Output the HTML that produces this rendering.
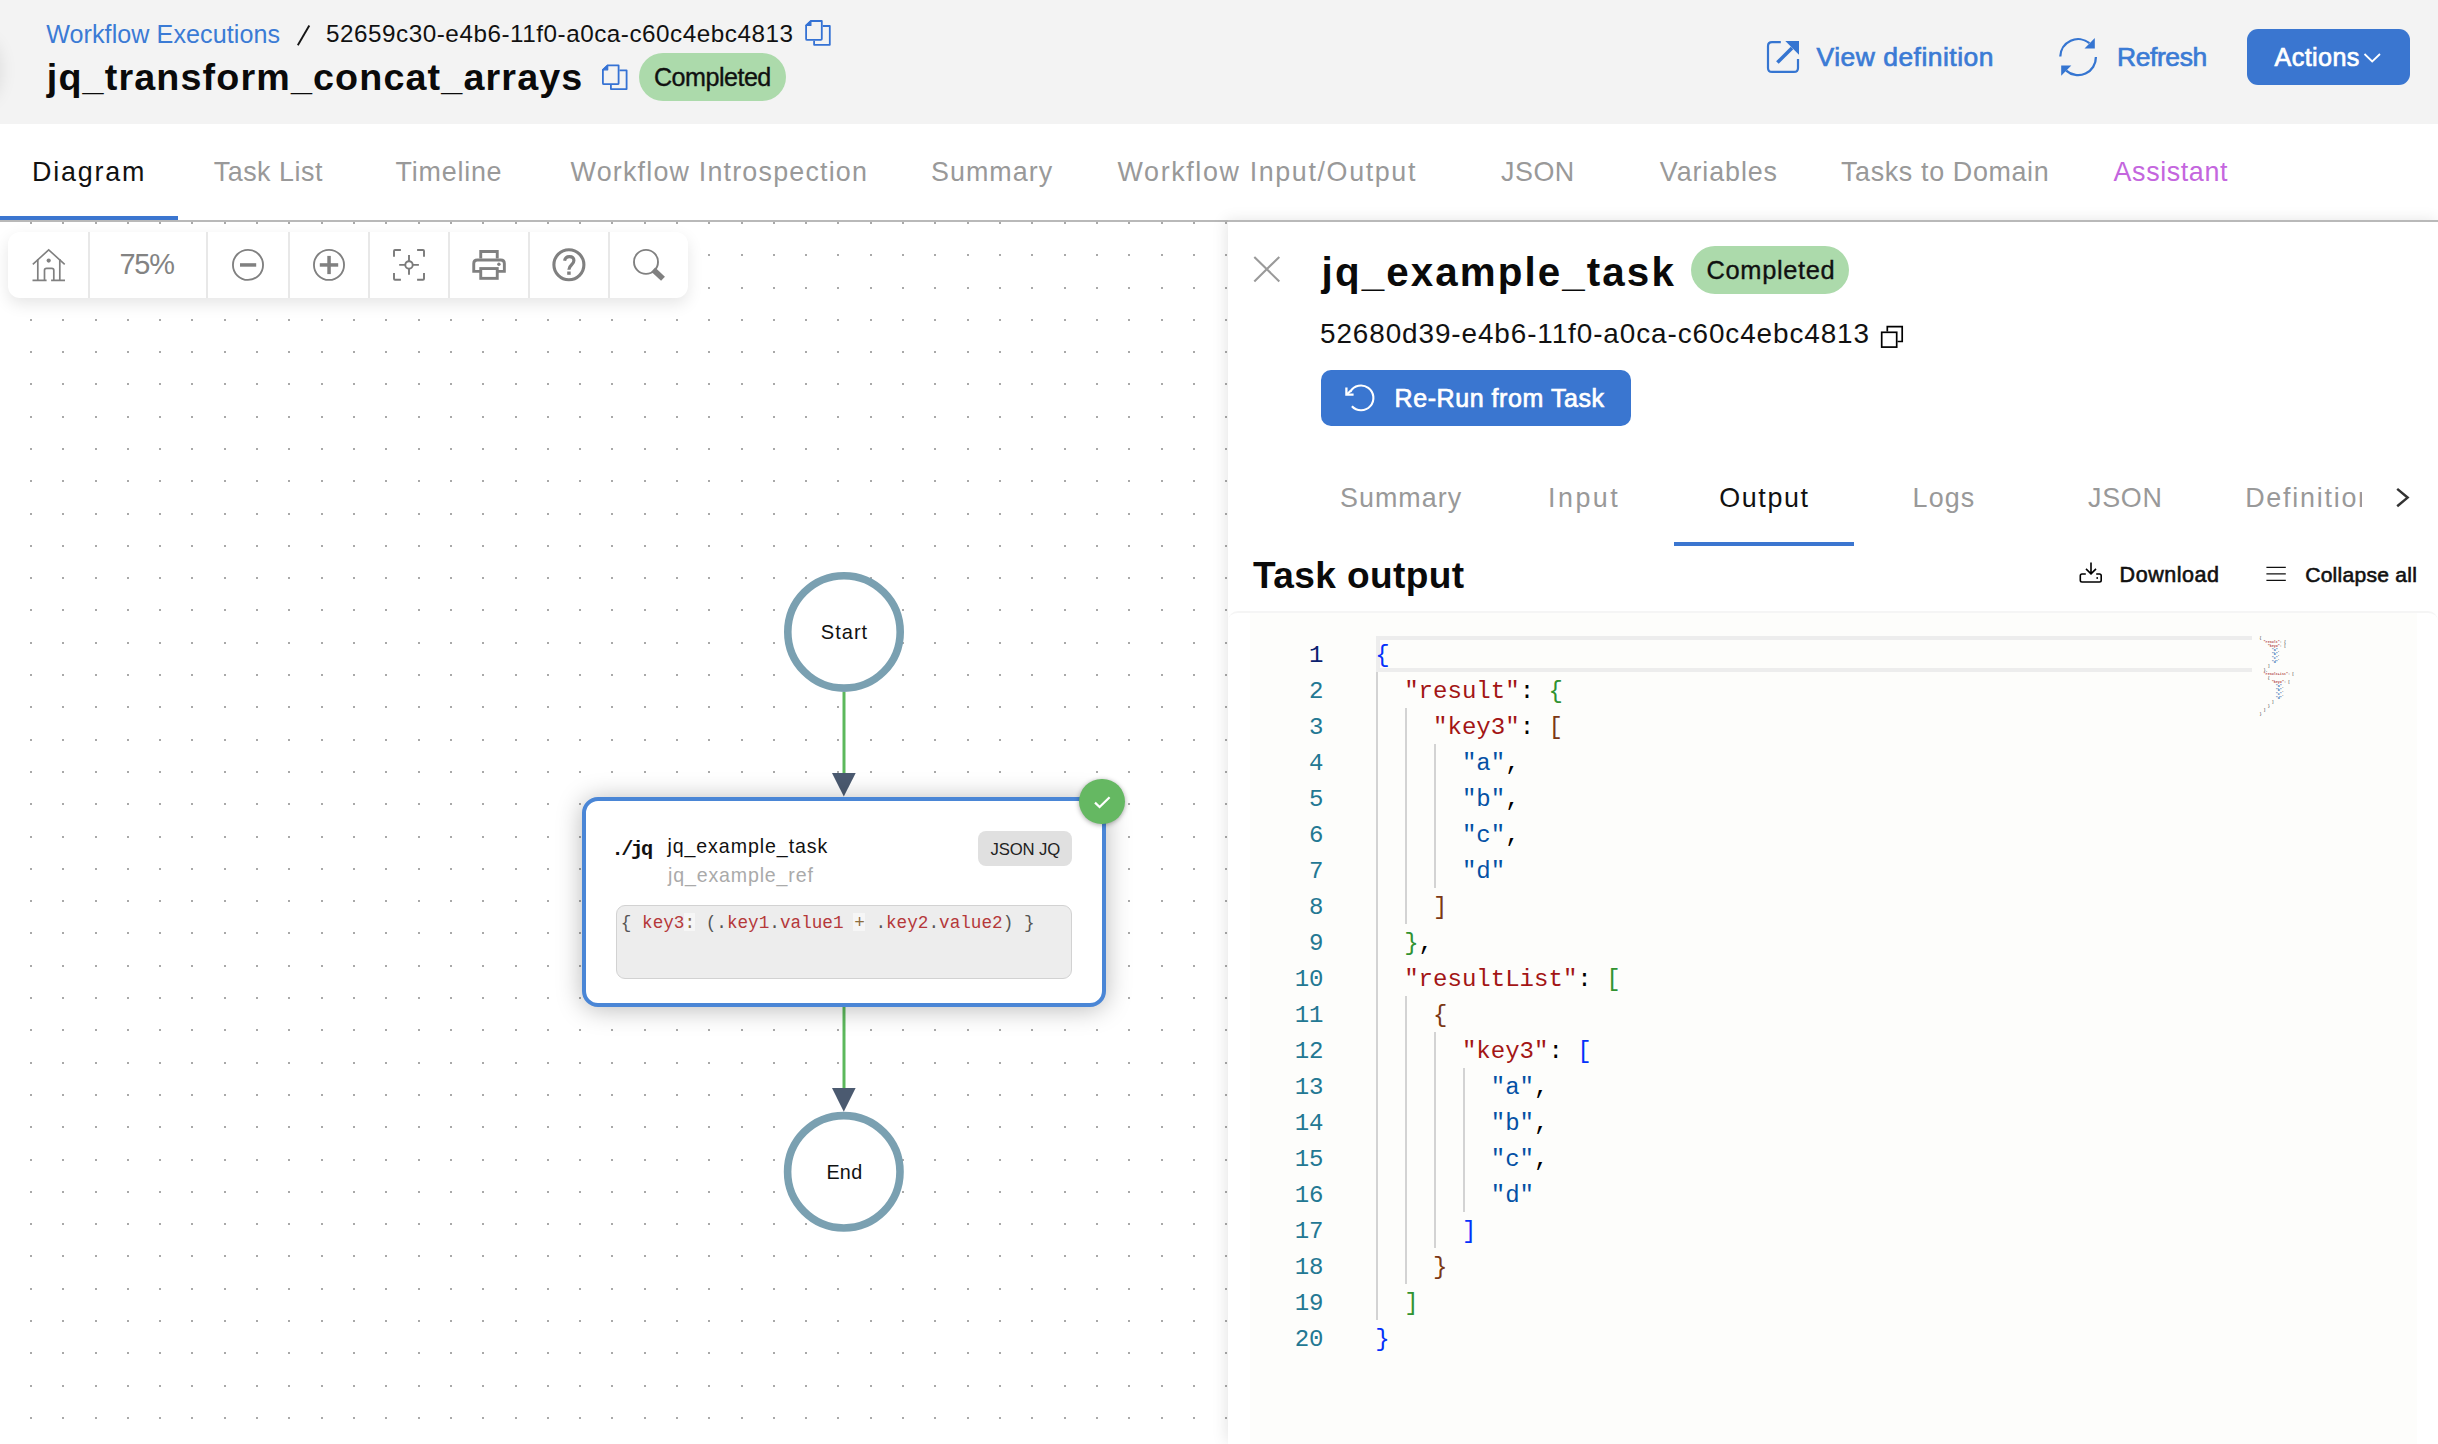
<!DOCTYPE html><html><head><meta charset="utf-8"><style>
*{box-sizing:border-box;margin:0;padding:0}
html,body{width:2438px;height:1444px;overflow:hidden;background:#fff}
body{position:relative;font-family:'Liberation Sans',sans-serif}
.a{position:absolute}
.tx{position:absolute;white-space:pre;line-height:1}
svg{position:absolute;overflow:visible}
</style></head><body><div class="a nt" style="left:0;top:0;width:2438px;height:124px;background:#f3f3f3"></div>
<div class="a nt" style="left:-30px;top:40px;width:30px;height:60px;border-radius:50%;box-shadow:0 0 18px rgba(0,0,0,0.10)"></div>
<svg class="nt" style="left:0;top:0" width="2438" height="124"><line x1="309.3" y1="25.5" x2="297.8" y2="45.3" stroke="#151515" stroke-width="1.9"/></svg>
<svg class="nt" style="left:0;top:0" width="2438" height="400"><path d="M810.9 21.0 H821.8 Q821.8 21.0 821.8 22.1 V39.1 Q821.8 39.9 820.8 39.9 H807.1 Q806.1 39.9 806.1 38.9 V25.5 Z" fill="none" stroke="#3572d4" stroke-width="1.8" stroke-linejoin="round"/><path d="M806.1 25.5 L810.9 21.0 V25.5 Z" fill="#3572d4" stroke="#3572d4" stroke-width="1.2" stroke-linejoin="round"/><path d="M822.7 26.0 H829.8 V44.8 H814.1 V40.8" fill="none" stroke="#3572d4" stroke-width="1.8" stroke-linejoin="round"/></svg>
<svg class="nt" style="left:0;top:0" width="2438" height="400"><path d="M607.7 65.3 H618.6 Q618.6 65.3 618.6 66.4 V83.4 Q618.6 84.2 617.6 84.2 H603.9 Q602.9 84.2 602.9 83.2 V69.8 Z" fill="none" stroke="#3572d4" stroke-width="1.8" stroke-linejoin="round"/><path d="M602.9 69.8 L607.7 65.3 V69.8 Z" fill="#3572d4" stroke="#3572d4" stroke-width="1.2" stroke-linejoin="round"/><path d="M619.5 70.3 H626.6 V89.1 H610.9 V85.1" fill="none" stroke="#3572d4" stroke-width="1.8" stroke-linejoin="round"/></svg>
<div class="a nt" style="left:639px;top:53px;width:147px;height:48px;border-radius:24px;background:#acdaab"></div>
<svg class="nt" style="left:0;top:0" width="2438" height="124"><path d="M1780.8 42.1 H1772 Q1768 42.1 1768 46.1 V67.9 Q1768 71.9 1772 71.9 H1794 Q1798 71.9 1798 67.9 V59.1" fill="none" stroke="#3575d1" stroke-width="2.2"/><path d="M1785.3 41 L1799 41 L1799 54.8 Z" fill="#3575d1"/><line x1="1777.4" y1="62.6" x2="1792" y2="48" stroke="#3575d1" stroke-width="3.6"/></svg>
<svg class="nt" style="left:0;top:0" width="2438" height="124"><path d="M2060.3 56.5 A17.8 17.8 0 0 1 2089.4 43.2" fill="none" stroke="#3575d1" stroke-width="2.3"/><path d="M2094.8 38 L2094.8 48.5 L2084.5 48.5 Z" fill="#3575d1"/><path d="M2095.9 57 A17.8 17.8 0 0 1 2066.2 70.6" fill="none" stroke="#3575d1" stroke-width="2.3"/><path d="M2061.2 65.6 L2071.3 65.6 L2061.2 75.7 Z" fill="#3575d1"/></svg>
<div class="a nt" style="left:2247px;top:29px;width:163px;height:56px;border-radius:11px;background:#3a76d0"></div>
<svg class="nt" style="left:0;top:0" width="2438" height="124"><path d="M2364.5 54 L2372.2 61.5 L2380 54" fill="none" stroke="#fff" stroke-width="1.8"/></svg>
<div class="a nt" style="left:0;top:124px;width:2438px;height:96px;background:#fff"></div>
<svg class="nt" style="left:0;top:0" width="1228" height="1444"><path fill="#a9a9a9" d="M30 222h2v2h-2zM62 222h2v2h-2zM95 222h2v2h-2zM127 222h2v2h-2zM159 222h2v2h-2zM191 222h2v2h-2zM224 222h2v2h-2zM256 222h2v2h-2zM288 222h2v2h-2zM321 222h2v2h-2zM353 222h2v2h-2zM385 222h2v2h-2zM418 222h2v2h-2zM450 222h2v2h-2zM482 222h2v2h-2zM515 222h2v2h-2zM547 222h2v2h-2zM579 222h2v2h-2zM611 222h2v2h-2zM644 222h2v2h-2zM676 222h2v2h-2zM708 222h2v2h-2zM741 222h2v2h-2zM773 222h2v2h-2zM805 222h2v2h-2zM837 222h2v2h-2zM870 222h2v2h-2zM902 222h2v2h-2zM934 222h2v2h-2zM967 222h2v2h-2zM999 222h2v2h-2zM1031 222h2v2h-2zM1064 222h2v2h-2zM1096 222h2v2h-2zM1128 222h2v2h-2zM1161 222h2v2h-2zM1193 222h2v2h-2zM1225 222h2v2h-2zM30 254h2v2h-2zM62 254h2v2h-2zM95 254h2v2h-2zM127 254h2v2h-2zM159 254h2v2h-2zM191 254h2v2h-2zM224 254h2v2h-2zM256 254h2v2h-2zM288 254h2v2h-2zM321 254h2v2h-2zM353 254h2v2h-2zM385 254h2v2h-2zM418 254h2v2h-2zM450 254h2v2h-2zM482 254h2v2h-2zM515 254h2v2h-2zM547 254h2v2h-2zM579 254h2v2h-2zM611 254h2v2h-2zM644 254h2v2h-2zM676 254h2v2h-2zM708 254h2v2h-2zM741 254h2v2h-2zM773 254h2v2h-2zM805 254h2v2h-2zM837 254h2v2h-2zM870 254h2v2h-2zM902 254h2v2h-2zM934 254h2v2h-2zM967 254h2v2h-2zM999 254h2v2h-2zM1031 254h2v2h-2zM1064 254h2v2h-2zM1096 254h2v2h-2zM1128 254h2v2h-2zM1161 254h2v2h-2zM1193 254h2v2h-2zM1225 254h2v2h-2zM30 287h2v2h-2zM62 287h2v2h-2zM95 287h2v2h-2zM127 287h2v2h-2zM159 287h2v2h-2zM191 287h2v2h-2zM224 287h2v2h-2zM256 287h2v2h-2zM288 287h2v2h-2zM321 287h2v2h-2zM353 287h2v2h-2zM385 287h2v2h-2zM418 287h2v2h-2zM450 287h2v2h-2zM482 287h2v2h-2zM515 287h2v2h-2zM547 287h2v2h-2zM579 287h2v2h-2zM611 287h2v2h-2zM644 287h2v2h-2zM676 287h2v2h-2zM708 287h2v2h-2zM741 287h2v2h-2zM773 287h2v2h-2zM805 287h2v2h-2zM837 287h2v2h-2zM870 287h2v2h-2zM902 287h2v2h-2zM934 287h2v2h-2zM967 287h2v2h-2zM999 287h2v2h-2zM1031 287h2v2h-2zM1064 287h2v2h-2zM1096 287h2v2h-2zM1128 287h2v2h-2zM1161 287h2v2h-2zM1193 287h2v2h-2zM1225 287h2v2h-2zM30 319h2v2h-2zM62 319h2v2h-2zM95 319h2v2h-2zM127 319h2v2h-2zM159 319h2v2h-2zM191 319h2v2h-2zM224 319h2v2h-2zM256 319h2v2h-2zM288 319h2v2h-2zM321 319h2v2h-2zM353 319h2v2h-2zM385 319h2v2h-2zM418 319h2v2h-2zM450 319h2v2h-2zM482 319h2v2h-2zM515 319h2v2h-2zM547 319h2v2h-2zM579 319h2v2h-2zM611 319h2v2h-2zM644 319h2v2h-2zM676 319h2v2h-2zM708 319h2v2h-2zM741 319h2v2h-2zM773 319h2v2h-2zM805 319h2v2h-2zM837 319h2v2h-2zM870 319h2v2h-2zM902 319h2v2h-2zM934 319h2v2h-2zM967 319h2v2h-2zM999 319h2v2h-2zM1031 319h2v2h-2zM1064 319h2v2h-2zM1096 319h2v2h-2zM1128 319h2v2h-2zM1161 319h2v2h-2zM1193 319h2v2h-2zM1225 319h2v2h-2zM30 351h2v2h-2zM62 351h2v2h-2zM95 351h2v2h-2zM127 351h2v2h-2zM159 351h2v2h-2zM191 351h2v2h-2zM224 351h2v2h-2zM256 351h2v2h-2zM288 351h2v2h-2zM321 351h2v2h-2zM353 351h2v2h-2zM385 351h2v2h-2zM418 351h2v2h-2zM450 351h2v2h-2zM482 351h2v2h-2zM515 351h2v2h-2zM547 351h2v2h-2zM579 351h2v2h-2zM611 351h2v2h-2zM644 351h2v2h-2zM676 351h2v2h-2zM708 351h2v2h-2zM741 351h2v2h-2zM773 351h2v2h-2zM805 351h2v2h-2zM837 351h2v2h-2zM870 351h2v2h-2zM902 351h2v2h-2zM934 351h2v2h-2zM967 351h2v2h-2zM999 351h2v2h-2zM1031 351h2v2h-2zM1064 351h2v2h-2zM1096 351h2v2h-2zM1128 351h2v2h-2zM1161 351h2v2h-2zM1193 351h2v2h-2zM1225 351h2v2h-2zM30 383h2v2h-2zM62 383h2v2h-2zM95 383h2v2h-2zM127 383h2v2h-2zM159 383h2v2h-2zM191 383h2v2h-2zM224 383h2v2h-2zM256 383h2v2h-2zM288 383h2v2h-2zM321 383h2v2h-2zM353 383h2v2h-2zM385 383h2v2h-2zM418 383h2v2h-2zM450 383h2v2h-2zM482 383h2v2h-2zM515 383h2v2h-2zM547 383h2v2h-2zM579 383h2v2h-2zM611 383h2v2h-2zM644 383h2v2h-2zM676 383h2v2h-2zM708 383h2v2h-2zM741 383h2v2h-2zM773 383h2v2h-2zM805 383h2v2h-2zM837 383h2v2h-2zM870 383h2v2h-2zM902 383h2v2h-2zM934 383h2v2h-2zM967 383h2v2h-2zM999 383h2v2h-2zM1031 383h2v2h-2zM1064 383h2v2h-2zM1096 383h2v2h-2zM1128 383h2v2h-2zM1161 383h2v2h-2zM1193 383h2v2h-2zM1225 383h2v2h-2zM30 416h2v2h-2zM62 416h2v2h-2zM95 416h2v2h-2zM127 416h2v2h-2zM159 416h2v2h-2zM191 416h2v2h-2zM224 416h2v2h-2zM256 416h2v2h-2zM288 416h2v2h-2zM321 416h2v2h-2zM353 416h2v2h-2zM385 416h2v2h-2zM418 416h2v2h-2zM450 416h2v2h-2zM482 416h2v2h-2zM515 416h2v2h-2zM547 416h2v2h-2zM579 416h2v2h-2zM611 416h2v2h-2zM644 416h2v2h-2zM676 416h2v2h-2zM708 416h2v2h-2zM741 416h2v2h-2zM773 416h2v2h-2zM805 416h2v2h-2zM837 416h2v2h-2zM870 416h2v2h-2zM902 416h2v2h-2zM934 416h2v2h-2zM967 416h2v2h-2zM999 416h2v2h-2zM1031 416h2v2h-2zM1064 416h2v2h-2zM1096 416h2v2h-2zM1128 416h2v2h-2zM1161 416h2v2h-2zM1193 416h2v2h-2zM1225 416h2v2h-2zM30 448h2v2h-2zM62 448h2v2h-2zM95 448h2v2h-2zM127 448h2v2h-2zM159 448h2v2h-2zM191 448h2v2h-2zM224 448h2v2h-2zM256 448h2v2h-2zM288 448h2v2h-2zM321 448h2v2h-2zM353 448h2v2h-2zM385 448h2v2h-2zM418 448h2v2h-2zM450 448h2v2h-2zM482 448h2v2h-2zM515 448h2v2h-2zM547 448h2v2h-2zM579 448h2v2h-2zM611 448h2v2h-2zM644 448h2v2h-2zM676 448h2v2h-2zM708 448h2v2h-2zM741 448h2v2h-2zM773 448h2v2h-2zM805 448h2v2h-2zM837 448h2v2h-2zM870 448h2v2h-2zM902 448h2v2h-2zM934 448h2v2h-2zM967 448h2v2h-2zM999 448h2v2h-2zM1031 448h2v2h-2zM1064 448h2v2h-2zM1096 448h2v2h-2zM1128 448h2v2h-2zM1161 448h2v2h-2zM1193 448h2v2h-2zM1225 448h2v2h-2zM30 480h2v2h-2zM62 480h2v2h-2zM95 480h2v2h-2zM127 480h2v2h-2zM159 480h2v2h-2zM191 480h2v2h-2zM224 480h2v2h-2zM256 480h2v2h-2zM288 480h2v2h-2zM321 480h2v2h-2zM353 480h2v2h-2zM385 480h2v2h-2zM418 480h2v2h-2zM450 480h2v2h-2zM482 480h2v2h-2zM515 480h2v2h-2zM547 480h2v2h-2zM579 480h2v2h-2zM611 480h2v2h-2zM644 480h2v2h-2zM676 480h2v2h-2zM708 480h2v2h-2zM741 480h2v2h-2zM773 480h2v2h-2zM805 480h2v2h-2zM837 480h2v2h-2zM870 480h2v2h-2zM902 480h2v2h-2zM934 480h2v2h-2zM967 480h2v2h-2zM999 480h2v2h-2zM1031 480h2v2h-2zM1064 480h2v2h-2zM1096 480h2v2h-2zM1128 480h2v2h-2zM1161 480h2v2h-2zM1193 480h2v2h-2zM1225 480h2v2h-2zM30 513h2v2h-2zM62 513h2v2h-2zM95 513h2v2h-2zM127 513h2v2h-2zM159 513h2v2h-2zM191 513h2v2h-2zM224 513h2v2h-2zM256 513h2v2h-2zM288 513h2v2h-2zM321 513h2v2h-2zM353 513h2v2h-2zM385 513h2v2h-2zM418 513h2v2h-2zM450 513h2v2h-2zM482 513h2v2h-2zM515 513h2v2h-2zM547 513h2v2h-2zM579 513h2v2h-2zM611 513h2v2h-2zM644 513h2v2h-2zM676 513h2v2h-2zM708 513h2v2h-2zM741 513h2v2h-2zM773 513h2v2h-2zM805 513h2v2h-2zM837 513h2v2h-2zM870 513h2v2h-2zM902 513h2v2h-2zM934 513h2v2h-2zM967 513h2v2h-2zM999 513h2v2h-2zM1031 513h2v2h-2zM1064 513h2v2h-2zM1096 513h2v2h-2zM1128 513h2v2h-2zM1161 513h2v2h-2zM1193 513h2v2h-2zM1225 513h2v2h-2zM30 545h2v2h-2zM62 545h2v2h-2zM95 545h2v2h-2zM127 545h2v2h-2zM159 545h2v2h-2zM191 545h2v2h-2zM224 545h2v2h-2zM256 545h2v2h-2zM288 545h2v2h-2zM321 545h2v2h-2zM353 545h2v2h-2zM385 545h2v2h-2zM418 545h2v2h-2zM450 545h2v2h-2zM482 545h2v2h-2zM515 545h2v2h-2zM547 545h2v2h-2zM579 545h2v2h-2zM611 545h2v2h-2zM644 545h2v2h-2zM676 545h2v2h-2zM708 545h2v2h-2zM741 545h2v2h-2zM773 545h2v2h-2zM805 545h2v2h-2zM837 545h2v2h-2zM870 545h2v2h-2zM902 545h2v2h-2zM934 545h2v2h-2zM967 545h2v2h-2zM999 545h2v2h-2zM1031 545h2v2h-2zM1064 545h2v2h-2zM1096 545h2v2h-2zM1128 545h2v2h-2zM1161 545h2v2h-2zM1193 545h2v2h-2zM1225 545h2v2h-2zM30 577h2v2h-2zM62 577h2v2h-2zM95 577h2v2h-2zM127 577h2v2h-2zM159 577h2v2h-2zM191 577h2v2h-2zM224 577h2v2h-2zM256 577h2v2h-2zM288 577h2v2h-2zM321 577h2v2h-2zM353 577h2v2h-2zM385 577h2v2h-2zM418 577h2v2h-2zM450 577h2v2h-2zM482 577h2v2h-2zM515 577h2v2h-2zM547 577h2v2h-2zM579 577h2v2h-2zM611 577h2v2h-2zM644 577h2v2h-2zM676 577h2v2h-2zM708 577h2v2h-2zM741 577h2v2h-2zM773 577h2v2h-2zM805 577h2v2h-2zM837 577h2v2h-2zM870 577h2v2h-2zM902 577h2v2h-2zM934 577h2v2h-2zM967 577h2v2h-2zM999 577h2v2h-2zM1031 577h2v2h-2zM1064 577h2v2h-2zM1096 577h2v2h-2zM1128 577h2v2h-2zM1161 577h2v2h-2zM1193 577h2v2h-2zM1225 577h2v2h-2zM30 609h2v2h-2zM62 609h2v2h-2zM95 609h2v2h-2zM127 609h2v2h-2zM159 609h2v2h-2zM191 609h2v2h-2zM224 609h2v2h-2zM256 609h2v2h-2zM288 609h2v2h-2zM321 609h2v2h-2zM353 609h2v2h-2zM385 609h2v2h-2zM418 609h2v2h-2zM450 609h2v2h-2zM482 609h2v2h-2zM515 609h2v2h-2zM547 609h2v2h-2zM579 609h2v2h-2zM611 609h2v2h-2zM644 609h2v2h-2zM676 609h2v2h-2zM708 609h2v2h-2zM741 609h2v2h-2zM773 609h2v2h-2zM805 609h2v2h-2zM837 609h2v2h-2zM870 609h2v2h-2zM902 609h2v2h-2zM934 609h2v2h-2zM967 609h2v2h-2zM999 609h2v2h-2zM1031 609h2v2h-2zM1064 609h2v2h-2zM1096 609h2v2h-2zM1128 609h2v2h-2zM1161 609h2v2h-2zM1193 609h2v2h-2zM1225 609h2v2h-2zM30 642h2v2h-2zM62 642h2v2h-2zM95 642h2v2h-2zM127 642h2v2h-2zM159 642h2v2h-2zM191 642h2v2h-2zM224 642h2v2h-2zM256 642h2v2h-2zM288 642h2v2h-2zM321 642h2v2h-2zM353 642h2v2h-2zM385 642h2v2h-2zM418 642h2v2h-2zM450 642h2v2h-2zM482 642h2v2h-2zM515 642h2v2h-2zM547 642h2v2h-2zM579 642h2v2h-2zM611 642h2v2h-2zM644 642h2v2h-2zM676 642h2v2h-2zM708 642h2v2h-2zM741 642h2v2h-2zM773 642h2v2h-2zM805 642h2v2h-2zM837 642h2v2h-2zM870 642h2v2h-2zM902 642h2v2h-2zM934 642h2v2h-2zM967 642h2v2h-2zM999 642h2v2h-2zM1031 642h2v2h-2zM1064 642h2v2h-2zM1096 642h2v2h-2zM1128 642h2v2h-2zM1161 642h2v2h-2zM1193 642h2v2h-2zM1225 642h2v2h-2zM30 674h2v2h-2zM62 674h2v2h-2zM95 674h2v2h-2zM127 674h2v2h-2zM159 674h2v2h-2zM191 674h2v2h-2zM224 674h2v2h-2zM256 674h2v2h-2zM288 674h2v2h-2zM321 674h2v2h-2zM353 674h2v2h-2zM385 674h2v2h-2zM418 674h2v2h-2zM450 674h2v2h-2zM482 674h2v2h-2zM515 674h2v2h-2zM547 674h2v2h-2zM579 674h2v2h-2zM611 674h2v2h-2zM644 674h2v2h-2zM676 674h2v2h-2zM708 674h2v2h-2zM741 674h2v2h-2zM773 674h2v2h-2zM805 674h2v2h-2zM837 674h2v2h-2zM870 674h2v2h-2zM902 674h2v2h-2zM934 674h2v2h-2zM967 674h2v2h-2zM999 674h2v2h-2zM1031 674h2v2h-2zM1064 674h2v2h-2zM1096 674h2v2h-2zM1128 674h2v2h-2zM1161 674h2v2h-2zM1193 674h2v2h-2zM1225 674h2v2h-2zM30 706h2v2h-2zM62 706h2v2h-2zM95 706h2v2h-2zM127 706h2v2h-2zM159 706h2v2h-2zM191 706h2v2h-2zM224 706h2v2h-2zM256 706h2v2h-2zM288 706h2v2h-2zM321 706h2v2h-2zM353 706h2v2h-2zM385 706h2v2h-2zM418 706h2v2h-2zM450 706h2v2h-2zM482 706h2v2h-2zM515 706h2v2h-2zM547 706h2v2h-2zM579 706h2v2h-2zM611 706h2v2h-2zM644 706h2v2h-2zM676 706h2v2h-2zM708 706h2v2h-2zM741 706h2v2h-2zM773 706h2v2h-2zM805 706h2v2h-2zM837 706h2v2h-2zM870 706h2v2h-2zM902 706h2v2h-2zM934 706h2v2h-2zM967 706h2v2h-2zM999 706h2v2h-2zM1031 706h2v2h-2zM1064 706h2v2h-2zM1096 706h2v2h-2zM1128 706h2v2h-2zM1161 706h2v2h-2zM1193 706h2v2h-2zM1225 706h2v2h-2zM30 739h2v2h-2zM62 739h2v2h-2zM95 739h2v2h-2zM127 739h2v2h-2zM159 739h2v2h-2zM191 739h2v2h-2zM224 739h2v2h-2zM256 739h2v2h-2zM288 739h2v2h-2zM321 739h2v2h-2zM353 739h2v2h-2zM385 739h2v2h-2zM418 739h2v2h-2zM450 739h2v2h-2zM482 739h2v2h-2zM515 739h2v2h-2zM547 739h2v2h-2zM579 739h2v2h-2zM611 739h2v2h-2zM644 739h2v2h-2zM676 739h2v2h-2zM708 739h2v2h-2zM741 739h2v2h-2zM773 739h2v2h-2zM805 739h2v2h-2zM837 739h2v2h-2zM870 739h2v2h-2zM902 739h2v2h-2zM934 739h2v2h-2zM967 739h2v2h-2zM999 739h2v2h-2zM1031 739h2v2h-2zM1064 739h2v2h-2zM1096 739h2v2h-2zM1128 739h2v2h-2zM1161 739h2v2h-2zM1193 739h2v2h-2zM1225 739h2v2h-2zM30 771h2v2h-2zM62 771h2v2h-2zM95 771h2v2h-2zM127 771h2v2h-2zM159 771h2v2h-2zM191 771h2v2h-2zM224 771h2v2h-2zM256 771h2v2h-2zM288 771h2v2h-2zM321 771h2v2h-2zM353 771h2v2h-2zM385 771h2v2h-2zM418 771h2v2h-2zM450 771h2v2h-2zM482 771h2v2h-2zM515 771h2v2h-2zM547 771h2v2h-2zM579 771h2v2h-2zM611 771h2v2h-2zM644 771h2v2h-2zM676 771h2v2h-2zM708 771h2v2h-2zM741 771h2v2h-2zM773 771h2v2h-2zM805 771h2v2h-2zM837 771h2v2h-2zM870 771h2v2h-2zM902 771h2v2h-2zM934 771h2v2h-2zM967 771h2v2h-2zM999 771h2v2h-2zM1031 771h2v2h-2zM1064 771h2v2h-2zM1096 771h2v2h-2zM1128 771h2v2h-2zM1161 771h2v2h-2zM1193 771h2v2h-2zM1225 771h2v2h-2zM30 803h2v2h-2zM62 803h2v2h-2zM95 803h2v2h-2zM127 803h2v2h-2zM159 803h2v2h-2zM191 803h2v2h-2zM224 803h2v2h-2zM256 803h2v2h-2zM288 803h2v2h-2zM321 803h2v2h-2zM353 803h2v2h-2zM385 803h2v2h-2zM418 803h2v2h-2zM450 803h2v2h-2zM482 803h2v2h-2zM515 803h2v2h-2zM547 803h2v2h-2zM579 803h2v2h-2zM611 803h2v2h-2zM644 803h2v2h-2zM676 803h2v2h-2zM708 803h2v2h-2zM741 803h2v2h-2zM773 803h2v2h-2zM805 803h2v2h-2zM837 803h2v2h-2zM870 803h2v2h-2zM902 803h2v2h-2zM934 803h2v2h-2zM967 803h2v2h-2zM999 803h2v2h-2zM1031 803h2v2h-2zM1064 803h2v2h-2zM1096 803h2v2h-2zM1128 803h2v2h-2zM1161 803h2v2h-2zM1193 803h2v2h-2zM1225 803h2v2h-2zM30 836h2v2h-2zM62 836h2v2h-2zM95 836h2v2h-2zM127 836h2v2h-2zM159 836h2v2h-2zM191 836h2v2h-2zM224 836h2v2h-2zM256 836h2v2h-2zM288 836h2v2h-2zM321 836h2v2h-2zM353 836h2v2h-2zM385 836h2v2h-2zM418 836h2v2h-2zM450 836h2v2h-2zM482 836h2v2h-2zM515 836h2v2h-2zM547 836h2v2h-2zM579 836h2v2h-2zM611 836h2v2h-2zM644 836h2v2h-2zM676 836h2v2h-2zM708 836h2v2h-2zM741 836h2v2h-2zM773 836h2v2h-2zM805 836h2v2h-2zM837 836h2v2h-2zM870 836h2v2h-2zM902 836h2v2h-2zM934 836h2v2h-2zM967 836h2v2h-2zM999 836h2v2h-2zM1031 836h2v2h-2zM1064 836h2v2h-2zM1096 836h2v2h-2zM1128 836h2v2h-2zM1161 836h2v2h-2zM1193 836h2v2h-2zM1225 836h2v2h-2zM30 868h2v2h-2zM62 868h2v2h-2zM95 868h2v2h-2zM127 868h2v2h-2zM159 868h2v2h-2zM191 868h2v2h-2zM224 868h2v2h-2zM256 868h2v2h-2zM288 868h2v2h-2zM321 868h2v2h-2zM353 868h2v2h-2zM385 868h2v2h-2zM418 868h2v2h-2zM450 868h2v2h-2zM482 868h2v2h-2zM515 868h2v2h-2zM547 868h2v2h-2zM579 868h2v2h-2zM611 868h2v2h-2zM644 868h2v2h-2zM676 868h2v2h-2zM708 868h2v2h-2zM741 868h2v2h-2zM773 868h2v2h-2zM805 868h2v2h-2zM837 868h2v2h-2zM870 868h2v2h-2zM902 868h2v2h-2zM934 868h2v2h-2zM967 868h2v2h-2zM999 868h2v2h-2zM1031 868h2v2h-2zM1064 868h2v2h-2zM1096 868h2v2h-2zM1128 868h2v2h-2zM1161 868h2v2h-2zM1193 868h2v2h-2zM1225 868h2v2h-2zM30 900h2v2h-2zM62 900h2v2h-2zM95 900h2v2h-2zM127 900h2v2h-2zM159 900h2v2h-2zM191 900h2v2h-2zM224 900h2v2h-2zM256 900h2v2h-2zM288 900h2v2h-2zM321 900h2v2h-2zM353 900h2v2h-2zM385 900h2v2h-2zM418 900h2v2h-2zM450 900h2v2h-2zM482 900h2v2h-2zM515 900h2v2h-2zM547 900h2v2h-2zM579 900h2v2h-2zM611 900h2v2h-2zM644 900h2v2h-2zM676 900h2v2h-2zM708 900h2v2h-2zM741 900h2v2h-2zM773 900h2v2h-2zM805 900h2v2h-2zM837 900h2v2h-2zM870 900h2v2h-2zM902 900h2v2h-2zM934 900h2v2h-2zM967 900h2v2h-2zM999 900h2v2h-2zM1031 900h2v2h-2zM1064 900h2v2h-2zM1096 900h2v2h-2zM1128 900h2v2h-2zM1161 900h2v2h-2zM1193 900h2v2h-2zM1225 900h2v2h-2zM30 932h2v2h-2zM62 932h2v2h-2zM95 932h2v2h-2zM127 932h2v2h-2zM159 932h2v2h-2zM191 932h2v2h-2zM224 932h2v2h-2zM256 932h2v2h-2zM288 932h2v2h-2zM321 932h2v2h-2zM353 932h2v2h-2zM385 932h2v2h-2zM418 932h2v2h-2zM450 932h2v2h-2zM482 932h2v2h-2zM515 932h2v2h-2zM547 932h2v2h-2zM579 932h2v2h-2zM611 932h2v2h-2zM644 932h2v2h-2zM676 932h2v2h-2zM708 932h2v2h-2zM741 932h2v2h-2zM773 932h2v2h-2zM805 932h2v2h-2zM837 932h2v2h-2zM870 932h2v2h-2zM902 932h2v2h-2zM934 932h2v2h-2zM967 932h2v2h-2zM999 932h2v2h-2zM1031 932h2v2h-2zM1064 932h2v2h-2zM1096 932h2v2h-2zM1128 932h2v2h-2zM1161 932h2v2h-2zM1193 932h2v2h-2zM1225 932h2v2h-2zM30 965h2v2h-2zM62 965h2v2h-2zM95 965h2v2h-2zM127 965h2v2h-2zM159 965h2v2h-2zM191 965h2v2h-2zM224 965h2v2h-2zM256 965h2v2h-2zM288 965h2v2h-2zM321 965h2v2h-2zM353 965h2v2h-2zM385 965h2v2h-2zM418 965h2v2h-2zM450 965h2v2h-2zM482 965h2v2h-2zM515 965h2v2h-2zM547 965h2v2h-2zM579 965h2v2h-2zM611 965h2v2h-2zM644 965h2v2h-2zM676 965h2v2h-2zM708 965h2v2h-2zM741 965h2v2h-2zM773 965h2v2h-2zM805 965h2v2h-2zM837 965h2v2h-2zM870 965h2v2h-2zM902 965h2v2h-2zM934 965h2v2h-2zM967 965h2v2h-2zM999 965h2v2h-2zM1031 965h2v2h-2zM1064 965h2v2h-2zM1096 965h2v2h-2zM1128 965h2v2h-2zM1161 965h2v2h-2zM1193 965h2v2h-2zM1225 965h2v2h-2zM30 997h2v2h-2zM62 997h2v2h-2zM95 997h2v2h-2zM127 997h2v2h-2zM159 997h2v2h-2zM191 997h2v2h-2zM224 997h2v2h-2zM256 997h2v2h-2zM288 997h2v2h-2zM321 997h2v2h-2zM353 997h2v2h-2zM385 997h2v2h-2zM418 997h2v2h-2zM450 997h2v2h-2zM482 997h2v2h-2zM515 997h2v2h-2zM547 997h2v2h-2zM579 997h2v2h-2zM611 997h2v2h-2zM644 997h2v2h-2zM676 997h2v2h-2zM708 997h2v2h-2zM741 997h2v2h-2zM773 997h2v2h-2zM805 997h2v2h-2zM837 997h2v2h-2zM870 997h2v2h-2zM902 997h2v2h-2zM934 997h2v2h-2zM967 997h2v2h-2zM999 997h2v2h-2zM1031 997h2v2h-2zM1064 997h2v2h-2zM1096 997h2v2h-2zM1128 997h2v2h-2zM1161 997h2v2h-2zM1193 997h2v2h-2zM1225 997h2v2h-2zM30 1029h2v2h-2zM62 1029h2v2h-2zM95 1029h2v2h-2zM127 1029h2v2h-2zM159 1029h2v2h-2zM191 1029h2v2h-2zM224 1029h2v2h-2zM256 1029h2v2h-2zM288 1029h2v2h-2zM321 1029h2v2h-2zM353 1029h2v2h-2zM385 1029h2v2h-2zM418 1029h2v2h-2zM450 1029h2v2h-2zM482 1029h2v2h-2zM515 1029h2v2h-2zM547 1029h2v2h-2zM579 1029h2v2h-2zM611 1029h2v2h-2zM644 1029h2v2h-2zM676 1029h2v2h-2zM708 1029h2v2h-2zM741 1029h2v2h-2zM773 1029h2v2h-2zM805 1029h2v2h-2zM837 1029h2v2h-2zM870 1029h2v2h-2zM902 1029h2v2h-2zM934 1029h2v2h-2zM967 1029h2v2h-2zM999 1029h2v2h-2zM1031 1029h2v2h-2zM1064 1029h2v2h-2zM1096 1029h2v2h-2zM1128 1029h2v2h-2zM1161 1029h2v2h-2zM1193 1029h2v2h-2zM1225 1029h2v2h-2zM30 1062h2v2h-2zM62 1062h2v2h-2zM95 1062h2v2h-2zM127 1062h2v2h-2zM159 1062h2v2h-2zM191 1062h2v2h-2zM224 1062h2v2h-2zM256 1062h2v2h-2zM288 1062h2v2h-2zM321 1062h2v2h-2zM353 1062h2v2h-2zM385 1062h2v2h-2zM418 1062h2v2h-2zM450 1062h2v2h-2zM482 1062h2v2h-2zM515 1062h2v2h-2zM547 1062h2v2h-2zM579 1062h2v2h-2zM611 1062h2v2h-2zM644 1062h2v2h-2zM676 1062h2v2h-2zM708 1062h2v2h-2zM741 1062h2v2h-2zM773 1062h2v2h-2zM805 1062h2v2h-2zM837 1062h2v2h-2zM870 1062h2v2h-2zM902 1062h2v2h-2zM934 1062h2v2h-2zM967 1062h2v2h-2zM999 1062h2v2h-2zM1031 1062h2v2h-2zM1064 1062h2v2h-2zM1096 1062h2v2h-2zM1128 1062h2v2h-2zM1161 1062h2v2h-2zM1193 1062h2v2h-2zM1225 1062h2v2h-2zM30 1094h2v2h-2zM62 1094h2v2h-2zM95 1094h2v2h-2zM127 1094h2v2h-2zM159 1094h2v2h-2zM191 1094h2v2h-2zM224 1094h2v2h-2zM256 1094h2v2h-2zM288 1094h2v2h-2zM321 1094h2v2h-2zM353 1094h2v2h-2zM385 1094h2v2h-2zM418 1094h2v2h-2zM450 1094h2v2h-2zM482 1094h2v2h-2zM515 1094h2v2h-2zM547 1094h2v2h-2zM579 1094h2v2h-2zM611 1094h2v2h-2zM644 1094h2v2h-2zM676 1094h2v2h-2zM708 1094h2v2h-2zM741 1094h2v2h-2zM773 1094h2v2h-2zM805 1094h2v2h-2zM837 1094h2v2h-2zM870 1094h2v2h-2zM902 1094h2v2h-2zM934 1094h2v2h-2zM967 1094h2v2h-2zM999 1094h2v2h-2zM1031 1094h2v2h-2zM1064 1094h2v2h-2zM1096 1094h2v2h-2zM1128 1094h2v2h-2zM1161 1094h2v2h-2zM1193 1094h2v2h-2zM1225 1094h2v2h-2zM30 1126h2v2h-2zM62 1126h2v2h-2zM95 1126h2v2h-2zM127 1126h2v2h-2zM159 1126h2v2h-2zM191 1126h2v2h-2zM224 1126h2v2h-2zM256 1126h2v2h-2zM288 1126h2v2h-2zM321 1126h2v2h-2zM353 1126h2v2h-2zM385 1126h2v2h-2zM418 1126h2v2h-2zM450 1126h2v2h-2zM482 1126h2v2h-2zM515 1126h2v2h-2zM547 1126h2v2h-2zM579 1126h2v2h-2zM611 1126h2v2h-2zM644 1126h2v2h-2zM676 1126h2v2h-2zM708 1126h2v2h-2zM741 1126h2v2h-2zM773 1126h2v2h-2zM805 1126h2v2h-2zM837 1126h2v2h-2zM870 1126h2v2h-2zM902 1126h2v2h-2zM934 1126h2v2h-2zM967 1126h2v2h-2zM999 1126h2v2h-2zM1031 1126h2v2h-2zM1064 1126h2v2h-2zM1096 1126h2v2h-2zM1128 1126h2v2h-2zM1161 1126h2v2h-2zM1193 1126h2v2h-2zM1225 1126h2v2h-2zM30 1159h2v2h-2zM62 1159h2v2h-2zM95 1159h2v2h-2zM127 1159h2v2h-2zM159 1159h2v2h-2zM191 1159h2v2h-2zM224 1159h2v2h-2zM256 1159h2v2h-2zM288 1159h2v2h-2zM321 1159h2v2h-2zM353 1159h2v2h-2zM385 1159h2v2h-2zM418 1159h2v2h-2zM450 1159h2v2h-2zM482 1159h2v2h-2zM515 1159h2v2h-2zM547 1159h2v2h-2zM579 1159h2v2h-2zM611 1159h2v2h-2zM644 1159h2v2h-2zM676 1159h2v2h-2zM708 1159h2v2h-2zM741 1159h2v2h-2zM773 1159h2v2h-2zM805 1159h2v2h-2zM837 1159h2v2h-2zM870 1159h2v2h-2zM902 1159h2v2h-2zM934 1159h2v2h-2zM967 1159h2v2h-2zM999 1159h2v2h-2zM1031 1159h2v2h-2zM1064 1159h2v2h-2zM1096 1159h2v2h-2zM1128 1159h2v2h-2zM1161 1159h2v2h-2zM1193 1159h2v2h-2zM1225 1159h2v2h-2zM30 1191h2v2h-2zM62 1191h2v2h-2zM95 1191h2v2h-2zM127 1191h2v2h-2zM159 1191h2v2h-2zM191 1191h2v2h-2zM224 1191h2v2h-2zM256 1191h2v2h-2zM288 1191h2v2h-2zM321 1191h2v2h-2zM353 1191h2v2h-2zM385 1191h2v2h-2zM418 1191h2v2h-2zM450 1191h2v2h-2zM482 1191h2v2h-2zM515 1191h2v2h-2zM547 1191h2v2h-2zM579 1191h2v2h-2zM611 1191h2v2h-2zM644 1191h2v2h-2zM676 1191h2v2h-2zM708 1191h2v2h-2zM741 1191h2v2h-2zM773 1191h2v2h-2zM805 1191h2v2h-2zM837 1191h2v2h-2zM870 1191h2v2h-2zM902 1191h2v2h-2zM934 1191h2v2h-2zM967 1191h2v2h-2zM999 1191h2v2h-2zM1031 1191h2v2h-2zM1064 1191h2v2h-2zM1096 1191h2v2h-2zM1128 1191h2v2h-2zM1161 1191h2v2h-2zM1193 1191h2v2h-2zM1225 1191h2v2h-2zM30 1223h2v2h-2zM62 1223h2v2h-2zM95 1223h2v2h-2zM127 1223h2v2h-2zM159 1223h2v2h-2zM191 1223h2v2h-2zM224 1223h2v2h-2zM256 1223h2v2h-2zM288 1223h2v2h-2zM321 1223h2v2h-2zM353 1223h2v2h-2zM385 1223h2v2h-2zM418 1223h2v2h-2zM450 1223h2v2h-2zM482 1223h2v2h-2zM515 1223h2v2h-2zM547 1223h2v2h-2zM579 1223h2v2h-2zM611 1223h2v2h-2zM644 1223h2v2h-2zM676 1223h2v2h-2zM708 1223h2v2h-2zM741 1223h2v2h-2zM773 1223h2v2h-2zM805 1223h2v2h-2zM837 1223h2v2h-2zM870 1223h2v2h-2zM902 1223h2v2h-2zM934 1223h2v2h-2zM967 1223h2v2h-2zM999 1223h2v2h-2zM1031 1223h2v2h-2zM1064 1223h2v2h-2zM1096 1223h2v2h-2zM1128 1223h2v2h-2zM1161 1223h2v2h-2zM1193 1223h2v2h-2zM1225 1223h2v2h-2zM30 1255h2v2h-2zM62 1255h2v2h-2zM95 1255h2v2h-2zM127 1255h2v2h-2zM159 1255h2v2h-2zM191 1255h2v2h-2zM224 1255h2v2h-2zM256 1255h2v2h-2zM288 1255h2v2h-2zM321 1255h2v2h-2zM353 1255h2v2h-2zM385 1255h2v2h-2zM418 1255h2v2h-2zM450 1255h2v2h-2zM482 1255h2v2h-2zM515 1255h2v2h-2zM547 1255h2v2h-2zM579 1255h2v2h-2zM611 1255h2v2h-2zM644 1255h2v2h-2zM676 1255h2v2h-2zM708 1255h2v2h-2zM741 1255h2v2h-2zM773 1255h2v2h-2zM805 1255h2v2h-2zM837 1255h2v2h-2zM870 1255h2v2h-2zM902 1255h2v2h-2zM934 1255h2v2h-2zM967 1255h2v2h-2zM999 1255h2v2h-2zM1031 1255h2v2h-2zM1064 1255h2v2h-2zM1096 1255h2v2h-2zM1128 1255h2v2h-2zM1161 1255h2v2h-2zM1193 1255h2v2h-2zM1225 1255h2v2h-2zM30 1288h2v2h-2zM62 1288h2v2h-2zM95 1288h2v2h-2zM127 1288h2v2h-2zM159 1288h2v2h-2zM191 1288h2v2h-2zM224 1288h2v2h-2zM256 1288h2v2h-2zM288 1288h2v2h-2zM321 1288h2v2h-2zM353 1288h2v2h-2zM385 1288h2v2h-2zM418 1288h2v2h-2zM450 1288h2v2h-2zM482 1288h2v2h-2zM515 1288h2v2h-2zM547 1288h2v2h-2zM579 1288h2v2h-2zM611 1288h2v2h-2zM644 1288h2v2h-2zM676 1288h2v2h-2zM708 1288h2v2h-2zM741 1288h2v2h-2zM773 1288h2v2h-2zM805 1288h2v2h-2zM837 1288h2v2h-2zM870 1288h2v2h-2zM902 1288h2v2h-2zM934 1288h2v2h-2zM967 1288h2v2h-2zM999 1288h2v2h-2zM1031 1288h2v2h-2zM1064 1288h2v2h-2zM1096 1288h2v2h-2zM1128 1288h2v2h-2zM1161 1288h2v2h-2zM1193 1288h2v2h-2zM1225 1288h2v2h-2zM30 1320h2v2h-2zM62 1320h2v2h-2zM95 1320h2v2h-2zM127 1320h2v2h-2zM159 1320h2v2h-2zM191 1320h2v2h-2zM224 1320h2v2h-2zM256 1320h2v2h-2zM288 1320h2v2h-2zM321 1320h2v2h-2zM353 1320h2v2h-2zM385 1320h2v2h-2zM418 1320h2v2h-2zM450 1320h2v2h-2zM482 1320h2v2h-2zM515 1320h2v2h-2zM547 1320h2v2h-2zM579 1320h2v2h-2zM611 1320h2v2h-2zM644 1320h2v2h-2zM676 1320h2v2h-2zM708 1320h2v2h-2zM741 1320h2v2h-2zM773 1320h2v2h-2zM805 1320h2v2h-2zM837 1320h2v2h-2zM870 1320h2v2h-2zM902 1320h2v2h-2zM934 1320h2v2h-2zM967 1320h2v2h-2zM999 1320h2v2h-2zM1031 1320h2v2h-2zM1064 1320h2v2h-2zM1096 1320h2v2h-2zM1128 1320h2v2h-2zM1161 1320h2v2h-2zM1193 1320h2v2h-2zM1225 1320h2v2h-2zM30 1352h2v2h-2zM62 1352h2v2h-2zM95 1352h2v2h-2zM127 1352h2v2h-2zM159 1352h2v2h-2zM191 1352h2v2h-2zM224 1352h2v2h-2zM256 1352h2v2h-2zM288 1352h2v2h-2zM321 1352h2v2h-2zM353 1352h2v2h-2zM385 1352h2v2h-2zM418 1352h2v2h-2zM450 1352h2v2h-2zM482 1352h2v2h-2zM515 1352h2v2h-2zM547 1352h2v2h-2zM579 1352h2v2h-2zM611 1352h2v2h-2zM644 1352h2v2h-2zM676 1352h2v2h-2zM708 1352h2v2h-2zM741 1352h2v2h-2zM773 1352h2v2h-2zM805 1352h2v2h-2zM837 1352h2v2h-2zM870 1352h2v2h-2zM902 1352h2v2h-2zM934 1352h2v2h-2zM967 1352h2v2h-2zM999 1352h2v2h-2zM1031 1352h2v2h-2zM1064 1352h2v2h-2zM1096 1352h2v2h-2zM1128 1352h2v2h-2zM1161 1352h2v2h-2zM1193 1352h2v2h-2zM1225 1352h2v2h-2zM30 1385h2v2h-2zM62 1385h2v2h-2zM95 1385h2v2h-2zM127 1385h2v2h-2zM159 1385h2v2h-2zM191 1385h2v2h-2zM224 1385h2v2h-2zM256 1385h2v2h-2zM288 1385h2v2h-2zM321 1385h2v2h-2zM353 1385h2v2h-2zM385 1385h2v2h-2zM418 1385h2v2h-2zM450 1385h2v2h-2zM482 1385h2v2h-2zM515 1385h2v2h-2zM547 1385h2v2h-2zM579 1385h2v2h-2zM611 1385h2v2h-2zM644 1385h2v2h-2zM676 1385h2v2h-2zM708 1385h2v2h-2zM741 1385h2v2h-2zM773 1385h2v2h-2zM805 1385h2v2h-2zM837 1385h2v2h-2zM870 1385h2v2h-2zM902 1385h2v2h-2zM934 1385h2v2h-2zM967 1385h2v2h-2zM999 1385h2v2h-2zM1031 1385h2v2h-2zM1064 1385h2v2h-2zM1096 1385h2v2h-2zM1128 1385h2v2h-2zM1161 1385h2v2h-2zM1193 1385h2v2h-2zM1225 1385h2v2h-2zM30 1417h2v2h-2zM62 1417h2v2h-2zM95 1417h2v2h-2zM127 1417h2v2h-2zM159 1417h2v2h-2zM191 1417h2v2h-2zM224 1417h2v2h-2zM256 1417h2v2h-2zM288 1417h2v2h-2zM321 1417h2v2h-2zM353 1417h2v2h-2zM385 1417h2v2h-2zM418 1417h2v2h-2zM450 1417h2v2h-2zM482 1417h2v2h-2zM515 1417h2v2h-2zM547 1417h2v2h-2zM579 1417h2v2h-2zM611 1417h2v2h-2zM644 1417h2v2h-2zM676 1417h2v2h-2zM708 1417h2v2h-2zM741 1417h2v2h-2zM773 1417h2v2h-2zM805 1417h2v2h-2zM837 1417h2v2h-2zM870 1417h2v2h-2zM902 1417h2v2h-2zM934 1417h2v2h-2zM967 1417h2v2h-2zM999 1417h2v2h-2zM1031 1417h2v2h-2zM1064 1417h2v2h-2zM1096 1417h2v2h-2zM1128 1417h2v2h-2zM1161 1417h2v2h-2zM1193 1417h2v2h-2zM1225 1417h2v2h-2z"/></svg>
<div class="a nt" style="left:0;top:220px;width:2438px;height:2px;background:#b9b9b9"></div>
<div class="a nt" style="left:0;top:216px;width:178px;height:4px;background:#3b76d0"></div>
<div class="a nt" style="left:8px;top:232px;width:680px;height:66px;border-radius:12px;background:#fff;box-shadow:0 6px 16px rgba(0,0,0,0.10)"></div>
<div class="a nt" style="left:88.2px;top:232px;width:2px;height:66px;background:#e8e8e8"></div>
<div class="a nt" style="left:206.2px;top:232px;width:2px;height:66px;background:#e8e8e8"></div>
<div class="a nt" style="left:287.9px;top:232px;width:2px;height:66px;background:#e8e8e8"></div>
<div class="a nt" style="left:368.2px;top:232px;width:2px;height:66px;background:#e8e8e8"></div>
<div class="a nt" style="left:448px;top:232px;width:2px;height:66px;background:#e8e8e8"></div>
<div class="a nt" style="left:528.2px;top:232px;width:2px;height:66px;background:#e8e8e8"></div>
<div class="a nt" style="left:608px;top:232px;width:2px;height:66px;background:#e8e8e8"></div>
<svg class="nt" style="left:0;top:0" width="1228" height="400"><path d="M32.8 264.3 L48.7 249.9 L64.7 264.3" fill="none" stroke="#808080" stroke-width="1.6"/><path d="M37.8 259 V280.4 M59.8 259 V280.4 M32.5 280.4 H46.6 M51.1 280.4 H65" fill="none" stroke="#808080" stroke-width="1.7"/><path d="M44.5 280.4 V270.3 Q44.5 268.3 46.5 268.3 H51.8 Q53.8 268.3 53.8 270.3 V280.4" fill="none" stroke="#808080" stroke-width="1.7"/><circle cx="48.7" cy="260.6" r="2.1" fill="#808080"/><circle cx="248" cy="264.9" r="15.05" fill="none" stroke="#808080" stroke-width="1.85"/><rect x="240" y="263.2" width="16.2" height="3.5" fill="#808080"/><circle cx="329" cy="264.9" r="15.05" fill="none" stroke="#808080" stroke-width="1.85"/><rect x="319.8" y="263.2" width="18.4" height="3.5" fill="#808080"/><rect x="327.3" y="255.9" width="3.5" height="18.2" fill="#808080"/><path d="M394 256.8 V251 Q394 250 395 250 H400.9 M417.1 250 H423 Q424 250 424 251 V256.8 M424 273 V278.8 Q424 279.8 423 279.8 H417.1 M400.9 279.8 H395 Q394 279.8 394 278.8 V273" fill="none" stroke="#7a7a7a" stroke-width="1.9"/><circle cx="409" cy="264.9" r="3.7" fill="none" stroke="#7a7a7a" stroke-width="1.9"/><path d="M409 255 V261.2 M409 268.6 V274.8 M399.2 264.9 H405.3 M412.7 264.9 H418.9" fill="none" stroke="#7a7a7a" stroke-width="1.9"/><path d="M480.75 258.5 V251.45 H497.25 V258.5" fill="none" stroke="#808080" stroke-width="2.9"/><path d="M480.75 271.35 H473.75 V263.5 Q473.75 259.95 477.3 259.95 H500.8 Q504.35 259.95 504.35 263.5 V271.35 H497.25" fill="none" stroke="#808080" stroke-width="2.9"/><rect x="480.75" y="268.55" width="16.5" height="9.8" fill="none" stroke="#808080" stroke-width="2.9"/><circle cx="498.9" cy="264.2" r="1.7" fill="#808080"/><circle cx="568.9" cy="264.8" r="15" fill="none" stroke="#808080" stroke-width="3.1"/><path d="M564.6 260.8 Q565.2 256.6 569.4 256.6 Q573.9 256.6 573.9 260.6 Q573.9 262.8 571.6 264.8 Q568.9 267.2 568.9 269.8" fill="none" stroke="#808080" stroke-width="3.2"/><rect x="567.2" y="271.5" width="3.5" height="3.3" fill="#808080"/><circle cx="646" cy="261.9" r="12" fill="none" stroke="#808080" stroke-width="1.9"/><line x1="653.2" y1="269.6" x2="663" y2="278.8" stroke="#808080" stroke-width="5.6"/></svg>
<svg class="nt" style="left:0;top:0" width="1228" height="1444"><line x1="844" y1="692" x2="844" y2="776" stroke="#5cb85c" stroke-width="3"/><path d="M832 772.9 L855.7 772.9 L843.8 796.6 Z" fill="#4b5a70"/><line x1="844" y1="1007" x2="844" y2="1090" stroke="#5cb85c" stroke-width="3"/><path d="M832 1088.1 L855.6 1088.1 L843.8 1111.7 Z" fill="#4b5a70"/><circle cx="844" cy="631.9" r="56.2" fill="#fff" stroke="#7aa0b1" stroke-width="7.6"/><circle cx="843.8" cy="1171.8" r="56.2" fill="#fff" stroke="#7aa0b1" stroke-width="7.6"/></svg>
<div class="a nt" style="left:582px;top:797px;width:524px;height:210px;border:4.5px solid #4a86d6;border-radius:16px;background:#fff;box-shadow:0 2px 26px rgba(0,0,0,0.28)"></div>
<div class="a nt" style="left:978.3px;top:831.3px;width:93.4px;height:35px;border-radius:8px;background:#e0e0e0"></div>
<div class="a nt" style="left:616.3px;top:905.4px;width:455.4px;height:74px;border-radius:9px;background:#ededed;border:1px solid #d2d2d2"></div>
<div class="a nt" style="left:1079.4px;top:778.7px;width:45.2px;height:45.2px;border-radius:50%;background:#65b862;box-shadow:0 1px 5px rgba(0,0,0,0.35)"></div>
<svg class="nt" style="left:0;top:0" width="1228" height="1444"><path d="M1095 802.6 L1099.6 807 L1109.6 797.2" fill="none" stroke="#fff" stroke-width="2.2"/></svg>
<div class="a nt" style="left:1228px;top:222px;width:1210px;height:1222px;background:#fff;box-shadow:-2px -2px 14px rgba(0,0,0,0.10)"></div>
<div class="a nt" style="left:1228px;top:220px;width:1210px;height:2px;background:#b9b9b9"></div>
<svg class="nt" style="left:0;top:0" width="2438" height="700"><path d="M1254.3 256.9 L1279.3 281.5 M1279.3 256.9 L1254.3 281.5" fill="none" stroke="#9a9a9a" stroke-width="2.1"/><rect x="1881.7" y="332.3" width="15" height="14.8" fill="none" stroke="#000" stroke-width="1.7"/><path d="M1887.3 331.5 V326.7 H1902.2 V341.5 H1897.5" fill="none" stroke="#000" stroke-width="1.7"/></svg>
<div class="a nt" style="left:1691px;top:246px;width:158px;height:48px;border-radius:24px;background:#acdaab"></div>
<div class="a nt" style="left:1321px;top:370px;width:309.5px;height:56px;border-radius:10px;background:#3a76d0"></div>
<svg class="nt" style="left:0;top:0" width="2438" height="700"><path d="M1350.3 391.6 A12.4 12.4 0 1 1 1351.9 406.3" fill="none" stroke="#fff" stroke-width="2.1"/><path d="M1346.4 387.4 V394.6 H1353.6" fill="none" stroke="#fff" stroke-width="2.3"/><line x1="1346.8" y1="394.2" x2="1351" y2="390.6" stroke="#fff" stroke-width="2.1"/></svg>
<div class="a nt" style="left:1674px;top:542px;width:180px;height:4px;background:#3b76d0"></div>
<svg class="nt" style="left:0;top:0" width="2438" height="700"><path d="M2397.2 488.9 L2407.6 497.6 L2397.2 506.3" fill="none" stroke="#333" stroke-width="2.5"/><path d="M2085.8 574 H2082 Q2080.3 574 2080.3 575.7 V580.3 Q2080.3 582 2082 582 H2099.5 Q2101.2 582 2101.2 580.3 V575.7 Q2101.2 574 2099.5 574 H2096.2" fill="none" stroke="#000" stroke-width="1.6"/><path d="M2091 562.6 V573.6 M2086 568.9 L2091 573.9 L2096 568.9" fill="none" stroke="#000" stroke-width="1.6"/><circle cx="2097.2" cy="578" r="0.9" fill="#000"/><path d="M2266.4 567.4 H2285.8 M2266.4 573.9 H2285.8 M2266.4 580.4 H2285.8" fill="none" stroke="#111" stroke-width="1.3"/></svg>
<div class="a nt" style="left:1228px;top:611px;width:1210px;height:845px;background:#fff;border:2px solid #f5f5f5;border-left:0;border-right:0;border-radius:10px"></div>
<div class="a nt" style="left:1250px;top:613px;width:1167px;height:831px;background:#fdfdfb"></div>
<div class="a nt" style="left:1376px;top:636px;width:876px;height:36px;border:4px solid #ededed;border-right:0"></div>
<div class="a nt" style="left:1376.0px;top:672px;width:2px;height:648px;background:#d3d3d3"></div>
<div class="a nt" style="left:1404.86px;top:708px;width:2px;height:216px;background:#d3d3d3"></div>
<div class="a nt" style="left:1433.72px;top:744px;width:2px;height:144px;background:#d3d3d3"></div>
<div class="a nt" style="left:1404.86px;top:996px;width:2px;height:288px;background:#d3d3d3"></div>
<div class="a nt" style="left:1433.72px;top:1032px;width:2px;height:216px;background:#d3d3d3"></div>
<div class="a nt" style="left:1462.58px;top:1068px;width:2px;height:144px;background:#d3d3d3"></div>
<div class="tx nt" style="left:1375.3px;top:637.60px;font-family:'Liberation Mono',monospace;font-size:24.050px;line-height:36px;color:#000"><span style="color:#0431fa">{</span>
  <span style="color:#a31515">&quot;result&quot;</span><span style="color:#000000">: </span><span style="color:#319331">{</span>
    <span style="color:#a31515">&quot;key3&quot;</span><span style="color:#000000">: </span><span style="color:#7b3814">[</span>
      <span style="color:#0451a5">&quot;a&quot;</span><span style="color:#000000">,</span>
      <span style="color:#0451a5">&quot;b&quot;</span><span style="color:#000000">,</span>
      <span style="color:#0451a5">&quot;c&quot;</span><span style="color:#000000">,</span>
      <span style="color:#0451a5">&quot;d&quot;</span>
    <span style="color:#7b3814">]</span>
  <span style="color:#319331">}</span><span style="color:#000000">,</span>
  <span style="color:#a31515">&quot;resultList&quot;</span><span style="color:#000000">: </span><span style="color:#319331">[</span>
    <span style="color:#7b3814">{</span>
      <span style="color:#a31515">&quot;key3&quot;</span><span style="color:#000000">: </span><span style="color:#0431fa">[</span>
        <span style="color:#0451a5">&quot;a&quot;</span><span style="color:#000000">,</span>
        <span style="color:#0451a5">&quot;b&quot;</span><span style="color:#000000">,</span>
        <span style="color:#0451a5">&quot;c&quot;</span><span style="color:#000000">,</span>
        <span style="color:#0451a5">&quot;d&quot;</span>
      <span style="color:#0431fa">]</span>
    <span style="color:#7b3814">}</span>
  <span style="color:#319331">]</span>
<span style="color:#0431fa">}</span></div>
<div class="tx nt" style="left:1223px;width:100.5px;text-align:right;top:637.60px;font-family:'Liberation Mono',monospace;font-size:24.050px;line-height:36px;color:#237893"><span style="color:#0b216f">1</span>
2
3
4
5
6
7
8
9
10
11
12
13
14
15
16
17
18
19
20</div>
<div class="tx nt" style="left:2259.5px;top:636px;font-family:'Liberation Mono',monospace;font-size:3.4px;line-height:4px;font-weight:700;opacity:0.85"><span style="color:#333">{</span>
  <span style="color:#a31515">&quot;result&quot;</span><span style="color:#333">: </span><span style="color:#333">{</span>
    <span style="color:#a31515">&quot;key3&quot;</span><span style="color:#333">: </span><span style="color:#333">[</span>
      <span style="color:#0451a5">&quot;a&quot;</span><span style="color:#333">,</span>
      <span style="color:#0451a5">&quot;b&quot;</span><span style="color:#333">,</span>
      <span style="color:#0451a5">&quot;c&quot;</span><span style="color:#333">,</span>
      <span style="color:#0451a5">&quot;d&quot;</span>
    <span style="color:#333">]</span>
  <span style="color:#333">}</span><span style="color:#333">,</span>
  <span style="color:#a31515">&quot;resultList&quot;</span><span style="color:#333">: </span><span style="color:#333">[</span>
    <span style="color:#333">{</span>
      <span style="color:#a31515">&quot;key3&quot;</span><span style="color:#333">: </span><span style="color:#333">[</span>
        <span style="color:#0451a5">&quot;a&quot;</span><span style="color:#333">,</span>
        <span style="color:#0451a5">&quot;b&quot;</span><span style="color:#333">,</span>
        <span style="color:#0451a5">&quot;c&quot;</span><span style="color:#333">,</span>
        <span style="color:#0451a5">&quot;d&quot;</span>
      <span style="color:#333">]</span>
    <span style="color:#333">}</span>
  <span style="color:#333">]</span>
<span style="color:#333">}</span></div>
<div class="a nt" style="left:683.5px;top:913px;width:11.6px;height:18px;background:#f6f6f6"></div>
<div class="a nt" style="left:853.2px;top:913px;width:11.6px;height:18px;background:#f6f6f6"></div>
<div class="tx nt" style="left:620.84px;top:915.16px;font-family:'Liberation Mono',monospace;font-size:17.68px;line-height:17.68px"><span style="color:#555">{ </span><span style="color:#b5383a">key3</span><span style="color:#8c6d3f">:</span><span style="color:#555"> (.</span><span style="color:#b5383a">key1</span><span style="color:#555">.</span><span style="color:#b5383a">value1</span><span style="color:#555"> </span><span style="color:#8c6d3f">+</span><span style="color:#555"> .</span><span style="color:#b5383a">key2</span><span style="color:#555">.</span><span style="color:#b5383a">value2</span><span style="color:#555">) }</span></div>
<div class="tx" style="left:46.20px;top:22.00px;font-family:'Liberation Sans', sans-serif;font-weight:400;font-size:25.145px;letter-spacing:0.067px;color:#3b7bd5;">Workflow Executions</div>
<div class="tx" style="left:326.00px;top:21.70px;font-family:'Liberation Sans', sans-serif;font-weight:400;font-size:24.273px;letter-spacing:0.520px;color:#111;">52659c30-e4b6-11f0-a0ca-c60c4ebc4813</div>
<div class="tx" style="left:46.80px;top:58.90px;font-family:'Liberation Sans', sans-serif;font-weight:700;font-size:37.689px;letter-spacing:1.152px;color:#0a0a0a;">jq_transform_concat_arrays</div>
<div class="tx" style="left:654.00px;top:64.80px;font-family:'Liberation Sans', sans-serif;font-weight:400;font-size:25.145px;letter-spacing:-0.525px;color:#111;-webkit-text-stroke:0.35px currentColor;">Completed</div>
<div class="tx" style="left:1816.60px;top:44.00px;font-family:'Liberation Sans', sans-serif;font-weight:400;font-size:26.453px;letter-spacing:0.486px;color:#3b7bd5;-webkit-text-stroke:0.7px currentColor;">View definition</div>
<div class="tx" style="left:2117.00px;top:44.00px;font-family:'Liberation Sans', sans-serif;font-weight:400;font-size:26.453px;letter-spacing:-0.400px;color:#3b7bd5;-webkit-text-stroke:0.7px currentColor;">Refresh</div>
<div class="tx" style="left:2274.60px;top:45.00px;font-family:'Liberation Sans', sans-serif;font-weight:400;font-size:25.145px;letter-spacing:0.400px;color:#ffffff;-webkit-text-stroke:0.7px currentColor;">Actions</div>
<div class="tx" style="left:32.00px;top:159.00px;font-family:'Liberation Sans', sans-serif;font-weight:400;font-size:26.890px;letter-spacing:1.800px;color:#111;">Diagram</div>
<div class="tx" style="left:213.80px;top:159.00px;font-family:'Liberation Sans', sans-serif;font-weight:400;font-size:26.890px;letter-spacing:0.500px;color:#999999;">Task List</div>
<div class="tx" style="left:395.60px;top:159.00px;font-family:'Liberation Sans', sans-serif;font-weight:400;font-size:26.890px;letter-spacing:0.771px;color:#999999;">Timeline</div>
<div class="tx" style="left:570.60px;top:159.00px;font-family:'Liberation Sans', sans-serif;font-weight:400;font-size:26.890px;letter-spacing:1.190px;color:#999999;">Workflow Introspection</div>
<div class="tx" style="left:931.00px;top:159.00px;font-family:'Liberation Sans', sans-serif;font-weight:400;font-size:26.890px;letter-spacing:1.033px;color:#999999;">Summary</div>
<div class="tx" style="left:1117.60px;top:159.00px;font-family:'Liberation Sans', sans-serif;font-weight:400;font-size:26.890px;letter-spacing:1.620px;color:#999999;">Workflow Input/Output</div>
<div class="tx" style="left:1501.00px;top:159.00px;font-family:'Liberation Sans', sans-serif;font-weight:400;font-size:26.890px;letter-spacing:0.533px;color:#999999;">JSON</div>
<div class="tx" style="left:1659.80px;top:159.00px;font-family:'Liberation Sans', sans-serif;font-weight:400;font-size:26.890px;letter-spacing:0.900px;color:#999999;">Variables</div>
<div class="tx" style="left:1841.00px;top:159.00px;font-family:'Liberation Sans', sans-serif;font-weight:400;font-size:26.890px;letter-spacing:0.643px;color:#999999;">Tasks to Domain</div>
<div class="tx" style="left:2113.60px;top:159.00px;font-family:'Liberation Sans', sans-serif;font-weight:400;font-size:26.890px;letter-spacing:0.600px;color:#c466de;">Assistant</div>
<div class="tx" style="left:119.60px;top:250.20px;font-family:'Liberation Sans', sans-serif;font-weight:400;font-size:28.924px;letter-spacing:-1.300px;color:#838383;">75%</div>
<div class="tx" style="left:820.80px;top:621.90px;font-family:'Liberation Sans', sans-serif;font-weight:400;font-size:20.058px;letter-spacing:1.000px;color:#111;">Start</div>
<div class="tx" style="left:826.40px;top:1163.00px;font-family:'Liberation Sans', sans-serif;font-weight:400;font-size:19.767px;letter-spacing:0.300px;color:#111;">End</div>
<div class="tx" style="left:611.60px;top:839.70px;font-family:'Liberation Mono', monospace;font-weight:700;font-size:20.276px;letter-spacing:-2.400px;color:#111;">./jq</div>
<div class="tx" style="left:667.40px;top:836.90px;font-family:'Liberation Sans', sans-serif;font-weight:400;font-size:19.586px;letter-spacing:0.929px;color:#111;">jq_example_task</div>
<div class="tx" style="left:668.00px;top:865.80px;font-family:'Liberation Sans', sans-serif;font-weight:400;font-size:19.586px;letter-spacing:0.846px;color:#aaaaaa;">jq_example_ref</div>
<div class="tx" style="left:990.60px;top:842.40px;font-family:'Liberation Sans', sans-serif;font-weight:400;font-size:16.715px;letter-spacing:-0.167px;color:#222;">JSON JQ</div>
<div class="tx" style="left:1321.60px;top:251.60px;font-family:'Liberation Sans', sans-serif;font-weight:700;font-size:40.341px;letter-spacing:2.100px;color:#0a0a0a;">jq_example_task</div>
<div class="tx" style="left:1706.60px;top:258.00px;font-family:'Liberation Sans', sans-serif;font-weight:400;font-size:25.436px;letter-spacing:0.625px;color:#111;-webkit-text-stroke:0.35px currentColor;">Completed</div>
<div class="tx" style="left:1320.00px;top:319.60px;font-family:'Liberation Sans', sans-serif;font-weight:400;font-size:27.907px;letter-spacing:0.903px;color:#111;">52680d39-e4b6-11f0-a0ca-c60c4ebc4813</div>
<div class="tx" style="left:1394.60px;top:386.00px;font-family:'Liberation Sans', sans-serif;font-weight:400;font-size:25.000px;letter-spacing:0.560px;color:#ffffff;-webkit-text-stroke:0.7px currentColor;">Re-Run from Task</div>
<div class="tx" style="left:1340.00px;top:484.90px;font-family:'Liberation Sans', sans-serif;font-weight:400;font-size:26.890px;letter-spacing:1.033px;color:#999999;">Summary</div>
<div class="tx" style="left:1548.00px;top:484.90px;font-family:'Liberation Sans', sans-serif;font-weight:400;font-size:26.890px;letter-spacing:2.500px;color:#999999;">Input</div>
<div class="tx" style="left:1719.20px;top:484.90px;font-family:'Liberation Sans', sans-serif;font-weight:400;font-size:26.890px;letter-spacing:1.640px;color:#111;">Output</div>
<div class="tx" style="left:1912.60px;top:484.90px;font-family:'Liberation Sans', sans-serif;font-weight:400;font-size:26.890px;letter-spacing:1.133px;color:#999999;">Logs</div>
<div class="tx" style="left:2088.00px;top:484.90px;font-family:'Liberation Sans', sans-serif;font-weight:400;font-size:26.890px;letter-spacing:0.733px;color:#999999;">JSON</div>
<div class="tx" style="left:2245.20px;top:484.90px;font-family:'Liberation Sans', sans-serif;font-weight:400;font-size:26.890px;letter-spacing:1.756px;color:#999999;overflow:hidden;width:116.8px;">Definition</div>
<div class="tx" style="left:1253.00px;top:556.80px;font-family:'Liberation Sans', sans-serif;font-weight:700;font-size:37.064px;letter-spacing:0.400px;color:#0a0a0a;">Task output</div>
<div class="tx" style="left:2119.60px;top:565.30px;font-family:'Liberation Sans', sans-serif;font-weight:400;font-size:21.512px;letter-spacing:0.543px;color:#111;-webkit-text-stroke:0.6px currentColor;">Download</div>
<div class="tx" style="left:2305.20px;top:563.70px;font-family:'Liberation Sans', sans-serif;font-weight:400;font-size:21.076px;letter-spacing:0.255px;color:#111;-webkit-text-stroke:0.6px currentColor;">Collapse all</div></body></html>
